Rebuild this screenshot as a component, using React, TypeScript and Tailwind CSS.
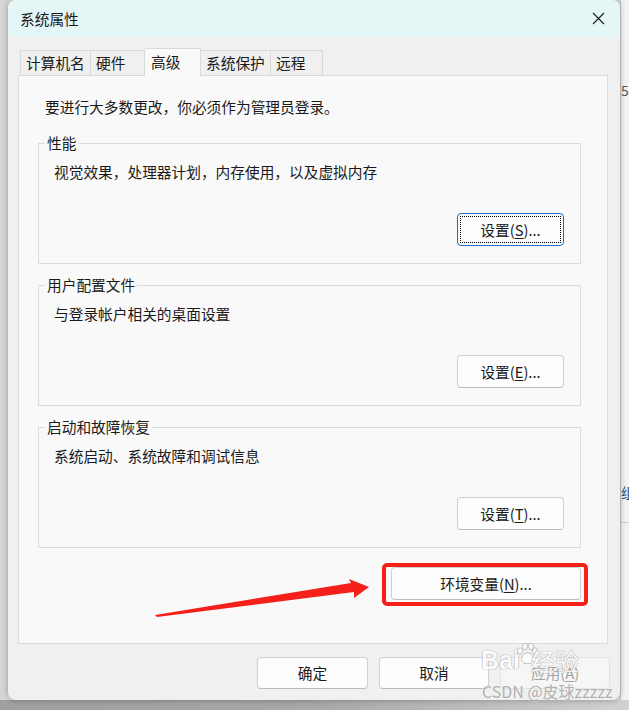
import React from "react";

const font = "font-['Noto_Sans_CJK_SC','Microsoft_YaHei',sans-serif]";

type BtnProps = {
  children: React.ReactNode;
  className?: string;
  focused?: boolean;
  disabled?: boolean;
};

function WinButton({ children, className = "", focused, disabled }: BtnProps) {
  let look = "border-[#d0d0d0] border-b-[#bcbcbc] bg-[#fdfdfd] text-[#1a1a1a]";
  if (disabled) look = "border-[#e2e2e2] bg-[#f6f6f6] text-[#a3a3a3]";
  if (focused)
    look =
      "border-[#1a6ec4] bg-[#fdfdfd] text-[#1a1a1a] outline outline-1 outline-dotted outline-black outline-offset-[-4px]";
  return (
    <div
      className={`flex shrink-0 items-center justify-center rounded-[4px] border text-[14.7px] leading-[20px] ${look} ${className}`}
    >
      {children}
    </div>
  );
}

function Mnemonic({ label, letter }: { label: string; letter: string }) {
  return (
    <span>
      {label}(<span className="underline underline-offset-2">{letter}</span>)...
    </span>
  );
}

function Group({ title, desc, button }: { title: string; desc: string; button: React.ReactNode }) {
  return (
    <fieldset className="ml-[19px] mr-[26px] flex h-[131px] flex-col border border-[#dcdcdc] p-0">
      <legend className="ml-[6px] px-[2px] text-[14.7px] leading-[20px] text-[#1a1a1a]">{title}</legend>
      <div className="mt-[9px] pl-[15px] text-[14.7px] leading-[20px] text-[#1a1a1a]">{desc}</div>
      <div className="mt-[31px] flex justify-end pr-[16px]">{button}</div>
    </fieldset>
  );
}

const tabs = [
  { label: "计算机名", w: "w-[71px]" },
  { label: "硬件", w: "w-[54px]" },
  { label: "高级", w: "w-[56px]", active: true },
  { label: "系统保护", w: "w-[70px]" },
  { label: "远程", w: "w-[52px]" },
];

export default function App() {
  return (
    <div className={`relative flex h-[710px] w-[629px] flex-col overflow-hidden bg-[#dcdcdc] ${font}`}>
      <div className="flex h-[700px]">
        {/* left sliver of the desktop */}
        <div className="w-[8px] bg-[#d6d6d6]" />

        {/* dialog */}
        <div className="relative z-10 flex w-[612px] flex-col overflow-hidden rounded-[8px] bg-[#f0f0f0] shadow-[0_0_6px_rgba(0,0,0,0.3)]">
          <div className="flex h-[37px] shrink-0 items-center justify-between bg-[#e5f6f6] pl-[12px] pr-[15px]">
            <span className="text-[14.7px] leading-[20px] text-[#1a1a1a]">系统属性</span>
            <svg width="13" height="13" viewBox="0 0 13 13" className="text-[#1a1a1a]">
              <path d="M1 1 L12 12 M12 1 L1 12" stroke="currentColor" strokeWidth="1.1" fill="none" />
            </svg>
          </div>

          {/* tabs */}
          <div className="relative z-10 -mb-px ml-[12px] mt-[11px] flex h-[28px] items-end">
            {tabs.map((t, i) => (
              <div
                key={t.label}
                className={
                  t.active
                    ? `${t.w} h-[28px] border-r border-t border-[#d9d9d9] bg-[#f9f9f9] pl-[6px] pt-[3px] text-[14.7px] leading-[20px] text-[#1a1a1a]`
                    : `${t.w} h-[26px] border-b border-r border-t border-[#d9d9d9] bg-[#f0f0f0] pl-[5px] pt-[2px] text-[14.7px] leading-[20px] text-[#1a1a1a] ${i === 0 ? "border-l" : ""}`
                }
              >
                {t.label}
              </div>
            ))}
          </div>

          {/* tab page */}
          <div className="ml-[10px] mr-[12px] flex h-[569px] shrink-0 flex-col border border-[#dcdcdc] bg-[#f9f9f9] pt-[21px]">
            <div className="pl-[26px] text-[14.7px] leading-[20px] text-[#1a1a1a]">
              要进行大多数更改，你必须作为管理员登录。
            </div>
            <div className="mt-[16px] flex flex-col gap-[11px]">
              <Group
                title="性能"
                desc="视觉效果，处理器计划，内存使用，以及虚拟内存"
                button={
                  <WinButton focused className="h-[33px] w-[107px]">
                    <Mnemonic label="设置" letter="S" />
                  </WinButton>
                }
              />
              <Group
                title="用户配置文件"
                desc="与登录帐户相关的桌面设置"
                button={
                  <WinButton className="h-[33px] w-[107px]">
                    <Mnemonic label="设置" letter="E" />
                  </WinButton>
                }
              />
              <Group
                title="启动和故障恢复"
                desc="系统启动、系统故障和调试信息"
                button={
                  <WinButton className="h-[33px] w-[107px]">
                    <Mnemonic label="设置" letter="T" />
                  </WinButton>
                }
              />
            </div>
            <div className="mr-[26px] mt-[19px] flex justify-end">
              <div className="relative">
                <WinButton className="h-[33px] w-[190px]">
                  <Mnemonic label="环境变量" letter="N" />
                </WinButton>
                <div className="pointer-events-none absolute -bottom-[6px] -left-[9px] -right-[7px] -top-[4px] rounded-[5px] border-[4px] border-[#f5201a]" />
              </div>
            </div>
          </div>

          {/* footer buttons */}
          <div className="mt-[13px] flex justify-end gap-[11px] pr-[10px]">
            <WinButton className="h-[32px] w-[111px]">确定</WinButton>
            <WinButton className="h-[32px] w-[110px]">取消</WinButton>
            <WinButton disabled className="h-[32px] w-[110px]">
              <span>
                应用(<span className="underline underline-offset-2">A</span>)
              </span>
            </WinButton>
          </div>
        </div>

        {/* right sliver of the window behind */}
        <div className="flex w-[9px] flex-col overflow-hidden border-l border-[#c9c9c9] bg-[#f3f3f3]">
          <div className="mt-[80px] whitespace-nowrap text-[14px] leading-[20px] text-[#555]">50</div>
          <div className="mt-[382px] whitespace-nowrap text-[14px] leading-[20px] text-[#2b4a7a]">组</div>
          <div className="mt-[20px] h-px bg-[#cfcfcf]" />
        </div>
      </div>
      <div className="h-[10px] bg-gradient-to-r from-[#9f9f9f] via-[#a8a8a8] to-[#d2d2d2]" />

      {/* red annotation arrow */}
      <svg className="pointer-events-none absolute inset-0 z-20" width="629" height="710" viewBox="0 0 629 710">
        <polygon points="155,615 351,583 349,579 369,587 354,598 354,592 157,617" fill="#f5201a" />
      </svg>

      {/* watermark */}
      <div className="pointer-events-none absolute left-[481px] top-[642px] z-20 flex items-end opacity-75">
        <span className="mb-[1px] font-['Liberation_Sans',sans-serif] text-[25px] font-bold leading-[30px] text-white [text-shadow:0_0_1px_#9a9a9a,0_0_1px_#9a9a9a,0_0_1px_#9a9a9a]">
          Bai
        </span>
        <svg width="26" height="24" viewBox="0 0 24 24" className="-ml-[6px] mb-[10px]">
          <g fill="#ffffff" stroke="#a8a8a8" strokeWidth="0.9">
            <ellipse cx="5" cy="9" rx="2.6" ry="3.2" />
            <ellipse cx="10" cy="4.5" rx="2.6" ry="3.2" />
            <ellipse cx="16" cy="4.5" rx="2.6" ry="3.2" />
            <ellipse cx="20" cy="9" rx="2.6" ry="3.2" />
            <path d="M12.5 11 C7 11 5 18 8 20.5 C10 22 15 22 17 20.5 C20 18 18 11 12.5 11 Z" />
          </g>
        </svg>
        <span className="-ml-[9px] text-[24px] leading-[30px] text-white [text-shadow:0_0_1px_#9a9a9a,0_0_1px_#9a9a9a,0_0_1px_#9a9a9a]">
          经验
        </span>
      </div>
      <div className="pointer-events-none absolute left-[482px] top-[681px] z-20 whitespace-nowrap text-[16px] leading-[20px] text-[#a9a9a9] opacity-90 [text-shadow:0_0_2px_#ffffff]">
        CSDN @皮球zzzzz
      </div>
    </div>
  );
}
